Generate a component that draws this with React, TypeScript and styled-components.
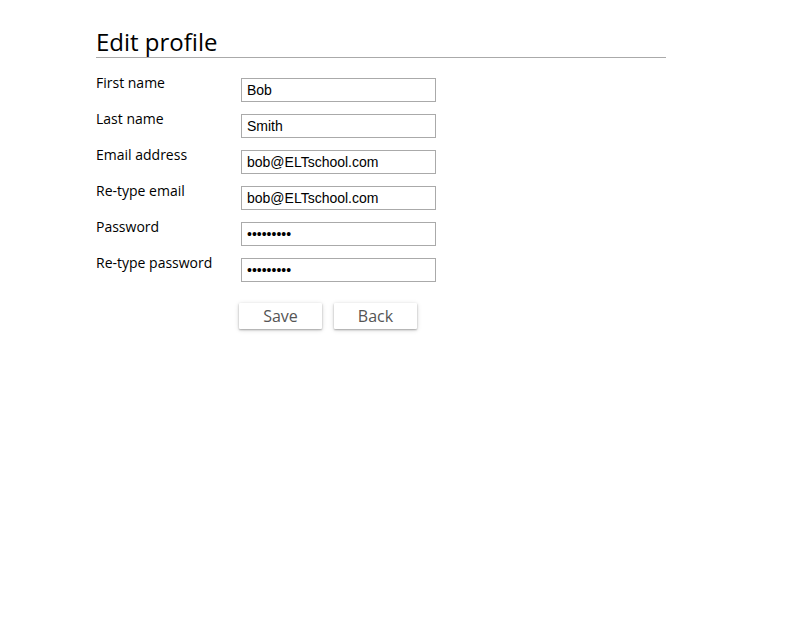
import React from "react";
import styled, { createGlobalStyle } from "styled-components";

const GlobalStyle = createGlobalStyle`
  body { margin: 0; background: #fff; color: #000; font-family: "Open Sans", sans-serif; }
  *, *::before, *::after { box-sizing: border-box; }
`;

const Page = styled.main`
  max-width: 762px;
  padding: 26px 96px 32px;
`;

const Title = styled.h1`
  margin: 0 0 20px;
  border-bottom: 1px solid #aaa;
  font-size: 24px;
  line-height: 31px;
  font-weight: 400;
`;

const Form = styled.form`
  display: flex;
  flex-direction: column;
  gap: 12px;
`;

const Row = styled.div`
  display: grid;
  grid-template-columns: 145px minmax(0, 195px);
`;

const Label = styled.label`
  font-size: 14px;
  line-height: 10px;
`;

const Input = styled.input`
  width: 100%;
  height: 24px;
  padding: 0 5px;
  border: 1px solid #aaa;
  border-radius: 0;
  background: #fff;
  color: #000;
  font-family: "Liberation Sans", Arial, sans-serif;
  font-size: 14px;
  outline: none;
`;

const Actions = styled.div`
  display: flex;
  gap: 12px;
  padding: 9px 0 0 143px;
`;

const Button = styled.button`
  width: 83px;
  height: 26px;
  padding: 0;
  border: 0;
  border-radius: 1px;
  background: #fff;
  box-shadow: 0 1px 2px rgba(0, 0, 0, 0.3), 0 1px 5px rgba(0, 0, 0, 0.15);
  color: #555;
  font-family: "Open Sans", sans-serif;
  font-size: 16px;
  font-weight: 400;
  line-height: 26px;
`;

const fields = [
  { id: "first-name", label: "First name", type: "text", value: "Bob" },
  { id: "last-name", label: "Last name", type: "text", value: "Smith" },
  { id: "email", label: "Email address", type: "email", value: "bob@ELTschool.com" },
  { id: "email-repeat", label: "Re-type email", type: "email", value: "bob@ELTschool.com" },
  { id: "password", label: "Password", type: "password", value: "password1" },
  { id: "password-repeat", label: "Re-type password", type: "password", value: "password1" },
];

export default function App() {
  return (
    <>
      <GlobalStyle />
      <Page>
        <Title>Edit profile</Title>
        <Form onSubmit={(event) => event.preventDefault()}>
          {fields.map((field) => (
            <Row key={field.id}>
              <Label htmlFor={field.id}>{field.label}</Label>
              <Input id={field.id} type={field.type} defaultValue={field.value} />
            </Row>
          ))}
          <Actions>
            <Button type="submit">Save</Button>
            <Button type="button">Back</Button>
          </Actions>
        </Form>
      </Page>
    </>
  );
}
